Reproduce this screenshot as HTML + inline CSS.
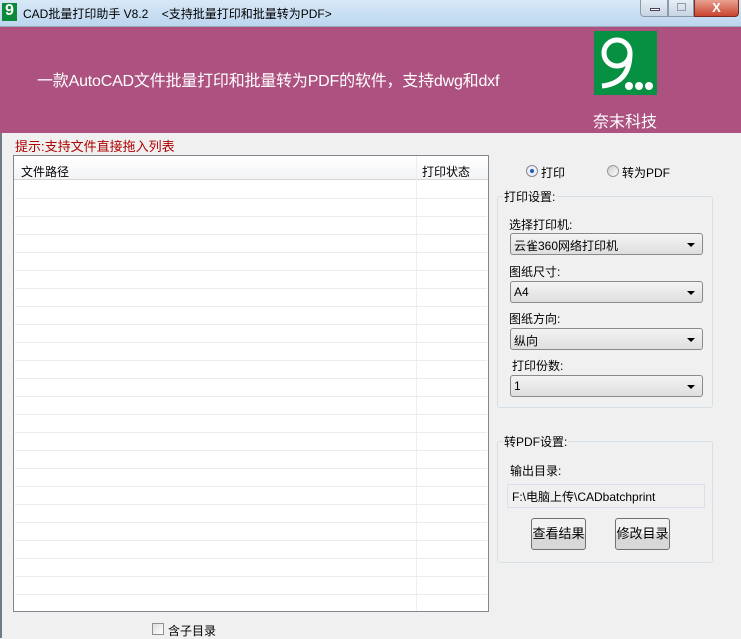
<!DOCTYPE html>
<html><head><meta charset="utf-8"><style>
*{margin:0;padding:0;box-sizing:border-box}
body{width:741px;height:638px;overflow:hidden;background:#f0f0f0;font-family:"Liberation Sans","Noto Sans CJK SC",sans-serif;font-size:12px;position:relative;color:#000}
.a{position:absolute}
.title{left:0;top:0;width:741px;height:27px;background:linear-gradient(#d8e8f8,#bcd6ef);border-bottom:1px solid #9ab}
.banner{left:0;top:27px;width:741px;height:106px;background:#ad5180}
.row{position:absolute;left:1px;right:1px;height:1px;background:#ececec}
.combo{position:absolute;left:510px;width:193px;height:22px;border:1px solid #8a8a8a;border-radius:3px;background:linear-gradient(#f4f4f4,#dedede);font-size:12px;padding:3px 0 0 3px}
.combo:after{content:"";position:absolute;right:7px;top:9px;border:4px solid transparent;border-top:4px solid #000;border-bottom:0}
.lbl{position:absolute;font-size:12px}
.grp{position:absolute;border:1px solid #d5dfe5;border-radius:3px}
.btn{position:absolute;width:55px;height:32px;border:1px solid #707070;border-radius:3px;background:linear-gradient(#f2f2f2 50%,#d8d8d8 50%);font-size:13px;text-align:center;line-height:30px}
</style></head><body>
<div class="a title"></div>
<div class="a" style="left:2px;top:3px;width:15px;height:18px;background:#0a8a3a;color:#fff;font-size:16px;font-weight:bold;line-height:16px;text-align:center">9</div>
<div class="a" style="left:23px;top:5px;font-size:12px;white-space:nowrap">CAD批量打印助手 V8.2 &nbsp;&nbsp;&nbsp;&lt;支持批量打印和批量转为PDF&gt;</div>
<div class="a" style="left:640px;top:0;width:28px;height:17px;border:1px solid #8a9aaa;border-top:0;border-radius:0 0 0 4px;background:linear-gradient(#e6eef6,#c6d4e2)"><div class="a" style="left:9px;top:8px;width:10px;height:3px;background:#fff;border:1px solid #445"></div></div>
<div class="a" style="left:668px;top:0;width:26px;height:17px;border:1px solid #8a9aaa;border-top:0;background:linear-gradient(#e6eef6,#c6d4e2)"><div class="a" style="left:8px;top:3px;width:9px;height:8px;border:1px solid #99a"></div></div>
<div class="a" style="left:694px;top:0;width:45px;height:17px;border:1px solid #7a2a20;border-top:0;border-radius:0 0 4px 0;background:linear-gradient(#e8a090,#c8452f);color:#fff;font-weight:bold;font-size:13px;text-align:center;line-height:15px">X</div>
<div class="a banner"></div>
<div class="a" style="left:37px;top:67px;color:#fff;font-size:16px;white-space:nowrap;letter-spacing:-0.2px">一款AutoCAD文件批量打印和批量转为PDF的软件，支持dwg和dxf</div>
<div class="a" style="left:594px;top:31px;width:63px;height:64px;background:#069042;overflow:hidden">
<svg width="63" height="64"><circle cx="23" cy="22" r="13" fill="none" stroke="#fff" stroke-width="5"/><path d="M36 22 Q36 52 8 55" fill="none" stroke="#fff" stroke-width="5"/><circle cx="35" cy="55" r="4" fill="#fff"/><circle cx="45" cy="55" r="4" fill="#fff"/><circle cx="55" cy="55" r="4" fill="#fff"/></svg></div>
<div class="a" style="left:593px;top:108px;color:#fff;font-size:16px">奈末科技</div>
<div class="a" style="left:0;top:133px;width:2px;height:505px;background:#6d7b8a"></div>
<div class="a" style="left:15px;top:136px;color:#b00000;font-size:13px">提示:支持文件直接拖入列表</div>
<div class="a" style="left:13px;top:155px;width:476px;height:457px;border:1px solid #828790;background:#fff;overflow:hidden">
<div class="a" style="left:0;top:0;width:474px;height:24px;background:linear-gradient(#fff,#f3f4f6);border-bottom:1px solid #d5d5d5"></div>
<div class="a" style="left:7px;top:7px;font-size:12px">文件路径</div>
<div class="a" style="left:408px;top:7px;font-size:12px">打印状态</div>
<div class="a" style="left:402px;top:0;width:1px;height:457px;background:#eee"></div>
<div class="row" style="top:42px"></div><div class="row" style="top:60px"></div><div class="row" style="top:78px"></div><div class="row" style="top:96px"></div><div class="row" style="top:114px"></div><div class="row" style="top:132px"></div><div class="row" style="top:150px"></div><div class="row" style="top:168px"></div><div class="row" style="top:186px"></div><div class="row" style="top:204px"></div><div class="row" style="top:222px"></div><div class="row" style="top:240px"></div><div class="row" style="top:258px"></div><div class="row" style="top:276px"></div><div class="row" style="top:294px"></div><div class="row" style="top:312px"></div><div class="row" style="top:330px"></div><div class="row" style="top:348px"></div><div class="row" style="top:366px"></div><div class="row" style="top:384px"></div><div class="row" style="top:402px"></div><div class="row" style="top:420px"></div><div class="row" style="top:438px"></div>
</div>
<div class="a" style="left:152px;top:623px;width:12px;height:12px;border:1px solid #8f8f8f;background:linear-gradient(135deg,#ddd,#fff)"></div>
<div class="a" style="left:168px;top:622px;font-size:12px">含子目录</div>
<div class="a" style="left:526px;top:165px;width:12px;height:12px;border-radius:50%;border:1px solid #888;background:#eef"><div class="a" style="left:3px;top:3px;width:4px;height:4px;border-radius:50%;background:#1a5fb4"></div></div>
<div class="lbl" style="left:541px;top:164px">打印</div>
<div class="a" style="left:607px;top:165px;width:12px;height:12px;border-radius:50%;border:1px solid #999;background:linear-gradient(135deg,#ccc,#fff)"></div>
<div class="lbl" style="left:622px;top:164px">转为PDF</div>
<div class="grp" style="left:497px;top:196px;width:216px;height:212px"></div>
<div class="lbl" style="left:503px;top:188px;background:#f0f0f0;padding:0 1px">打印设置:</div>
<div class="lbl" style="left:509px;top:216px">选择打印机:</div>
<div class="combo" style="top:233px">云雀360网络打印机</div>
<div class="lbl" style="left:509px;top:263px">图纸尺寸:</div>
<div class="combo" style="top:281px">A4</div>
<div class="lbl" style="left:509px;top:310px">图纸方向:</div>
<div class="combo" style="top:328px">纵向</div>
<div class="lbl" style="left:512px;top:357px">打印份数:</div>
<div class="combo" style="top:375px">1</div>
<div class="grp" style="left:497px;top:441px;width:216px;height:122px"></div>
<div class="lbl" style="left:503px;top:433px;background:#f0f0f0;padding:0 1px">转PDF设置:</div>
<div class="lbl" style="left:510px;top:462px">输出目录:</div>
<div class="a" style="left:507px;top:484px;width:198px;height:24px;border:1px solid #dde;background:#f0f0f0;padding:3px 0 0 4px;font-size:12px">F:\电脑上传\CADbatchprint</div>
<div class="btn" style="left:531px;top:518px">查看结果</div>
<div class="btn" style="left:615px;top:518px">修改目录</div>
</body></html>
